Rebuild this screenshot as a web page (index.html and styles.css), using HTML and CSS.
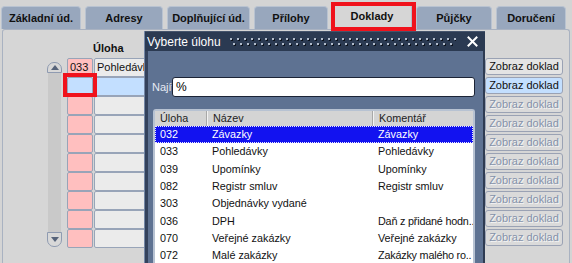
FILE: index.html
```html
<!DOCTYPE html>
<html lang="cs">
<head>
<meta charset="utf-8">
<title>Doklady</title>
<link rel="stylesheet" href="styles.css">
</head>
<body>
<div class="tabs">
  <div class="tab w1">Základní úd.</div>
  <div class="tab w2">Adresy</div>
  <div class="tab w3">Doplňující úd.</div>
  <div class="tab w4">Přílohy</div>
  <div class="tab w5 active">Doklady</div>
  <div class="tab w6">Půjčky</div>
  <div class="tab w7">Doručení</div>
</div>
<div class="panel">
  <div class="panel-head">Úloha</div>
  <div class="panel-body">
    <div class="scroll">
      <div class="sb-up"><svg width="8" height="5" viewBox="0 0 8 5"><path d="M0 5 L4 0 L8 5 Z" fill="#56637a"/></svg></div>
      <div class="sb-track"></div>
      <div class="sb-down"><svg width="8" height="5" viewBox="0 0 8 5"><path d="M0 0 L8 0 L4 5 Z" fill="#56637a"/></svg></div>
    </div>
    <div class="grid">
      <div class="row"><div class="cell code">033</div><div class="cell name">Pohledávky</div></div>
      <div class="row sel"><div class="cell code mark"></div><div class="cell name"></div></div>
      <div class="row"><div class="cell code"></div><div class="cell name"></div></div>
      <div class="row"><div class="cell code"></div><div class="cell name"></div></div>
      <div class="row"><div class="cell code"></div><div class="cell name"></div></div>
      <div class="row"><div class="cell code"></div><div class="cell name"></div></div>
      <div class="row"><div class="cell code"></div><div class="cell name"></div></div>
      <div class="row"><div class="cell code"></div><div class="cell name"></div></div>
      <div class="row"><div class="cell code"></div><div class="cell name"></div></div>
      <div class="row"><div class="cell code"></div><div class="cell name"></div></div>
    </div>
    <div class="buttons">
      <div class="btn">Zobraz doklad</div>
      <div class="btn btn-sel">Zobraz doklad</div>
      <div class="btn btn-dis">Zobraz doklad</div>
      <div class="btn btn-dis">Zobraz doklad</div>
      <div class="btn btn-dis">Zobraz doklad</div>
      <div class="btn btn-dis">Zobraz doklad</div>
      <div class="btn btn-dis">Zobraz doklad</div>
      <div class="btn btn-dis">Zobraz doklad</div>
      <div class="btn btn-dis">Zobraz doklad</div>
      <div class="btn btn-dis">Zobraz doklad</div>
    </div>
  </div>
</div>

<div class="dialog">
  <div class="dlg-title">
    <span class="dlg-caption">Vyberte úlohu</span>
    <span class="grip"></span>
    <svg class="close" width="11" height="11" viewBox="0 0 11 11"><path d="M1.5 1.5 L9.5 9.5 M9.5 1.5 L1.5 9.5" stroke="#fff" stroke-width="2" stroke-linecap="square"/></svg>
  </div>
  <div class="dlg-body">
    <div class="search">
      <span class="search-label">Najít</span>
      <div class="search-input">%</div>
    </div>
    <div class="list">
      <div class="lrow lhead"><div class="c1">Úloha</div><div class="c2">Název</div><div class="c3">Komentář</div></div>
      <div class="lrow lsel"><div class="c1">032</div><div class="c2">Závazky</div><div class="c3">Závazky</div></div>
      <div class="lrow"><div class="c1">033</div><div class="c2">Pohledávky</div><div class="c3">Pohledávky</div></div>
      <div class="lrow"><div class="c1">039</div><div class="c2">Upomínky</div><div class="c3">Upomínky</div></div>
      <div class="lrow"><div class="c1">082</div><div class="c2">Registr smluv</div><div class="c3">Registr smluv</div></div>
      <div class="lrow"><div class="c1">303</div><div class="c2">Objednávky vydané</div><div class="c3"></div></div>
      <div class="lrow"><div class="c1">036</div><div class="c2">DPH</div><div class="c3 tight">Daň z přidané hodn..</div></div>
      <div class="lrow"><div class="c1">070</div><div class="c2">Veřejné zakázky</div><div class="c3">Veřejné zakázky</div></div>
      <div class="lrow"><div class="c1">072</div><div class="c2">Malé zakázky</div><div class="c3 tight">Zakázky malého ro..</div></div>
    </div>
  </div>
</div>
</body>
</html>
```
FILE: styles.css
```css
html, body {
  margin: 0;
  padding: 0;
}
body {
  width: 572px;
  height: 263px;
  overflow: hidden;
  position: relative;
  background: #d4d4d4;
  font-family: "Liberation Sans", Arial, sans-serif;
  font-size: 11px;
  color: #111;
}

/* tabs */
.tabs {
  display: flex;
  gap: 4px;
  padding: 6px 0 0 1px;
  height: 23px;
}
.tab {
  box-sizing: border-box;
  height: 23px;
  background: #98a7bd;
  border: 1px solid #b9c3d1;
  border-bottom: none;
  border-radius: 4px 4px 0 0;
  display: flex;
  align-items: center;
  justify-content: center;
  font-weight: bold;
  color: #111;
  white-space: nowrap;
}
.w1 { width: 80px; }
.w2 { width: 78px; }
.w3 { width: 83px; }
.w4 { width: 74px; }
.w5 { width: 80px; }
.w6 { width: 76px; }
.w7 { width: 70px; }
.tab.active {
  background: #d6d6d6;
  border-color: #b4bcc8;
  margin-top: -2px;
  height: 26px;
  padding-bottom: 3px;
  position: relative;
  z-index: 2;
}
.tab.active::after {
  content: "";
  position: absolute;
  left: -2px;
  right: -5px;
  top: -3px;
  bottom: -1px;
  border: 4px solid #f0121c;
}

/* panel */
.panel {
  box-sizing: border-box;
  margin-left: 2px;
  width: 568px;
  height: 234px;
  background: #d6d6d6;
  border: 1px solid #a9b2c1;
  border-bottom: none;
  border-radius: 3px 3px 0 0;
}
.panel-head {
  box-sizing: border-box;
  height: 28px;
  padding: 11px 0 0 90px;
  line-height: 14px;
  font-weight: bold;
}
.panel-body {
  display: flex;
  padding-left: 44px;
}
.scroll {
  width: 15px;
  margin-top: 4px;
  margin-right: 5px;
  display: flex;
  flex-direction: column;
}
.sb-up, .sb-down {
  box-sizing: border-box;
  background: #d8d8d8;
  border: 1px solid #8f9bb1;
  display: flex;
  align-items: center;
  justify-content: center;
}
.sb-up {
  height: 11px;
  border-radius: 7px 7px 0 0;
}
.sb-track {
  height: 159px;
  background: #c9c9c9;
  margin: 0 1px;
}
.sb-down {
  height: 15px;
  border-radius: 0 0 7px 7px;
}

.grid {
  width: 414px;
  display: flex;
  flex-direction: column;
}
.row {
  display: flex;
  gap: 1px;
  height: 19px;
}
.cell {
  box-sizing: border-box;
  height: 19px;
  border: 1px solid #98a4b8;
  border-radius: 2px;
  line-height: 17px;
  padding-left: 2px;
  white-space: nowrap;
  overflow: hidden;
}
.code {
  width: 26px;
  background: #ffbfbf;
}
.name {
  flex: 1;
  background: #ebebeb;
}
.row.sel .cell {
  background: #c3dfff;
}
.mark {
  position: relative;
  overflow: visible;
}
.mark::after {
  content: "";
  position: absolute;
  left: -5px;
  right: -5px;
  top: -5px;
  bottom: -2px;
  border: 4px solid #f0121c;
}

.buttons {
  margin-left: 4px;
  display: flex;
  flex-direction: column;
  gap: 2px;
}
.btn {
  box-sizing: border-box;
  width: 78px;
  height: 17px;
  border: 1px solid #9aa2b4;
  border-radius: 3px;
  background: #e4e4e4;
  text-align: center;
  line-height: 15px;
  color: #111;
  white-space: nowrap;
}
.btn-sel {
  background: #c3dfff;
}
.btn-dis {
  background: #dadada;
  color: #8592aa;
  text-shadow: 1px 1px 0 #f4f4f4;
}

/* dialog */
.dialog {
  position: absolute;
  left: 145px;
  top: 31px;
  width: 340px;
  height: 232px;
  background: #5e7292;
  box-shadow: -1px 0 0 #7487a6;
  display: flex;
  flex-direction: column;
  overflow: hidden;
}
.dlg-title {
  height: 20px;
  flex: none;
  background: #2b3a52;
  border-top: 1px solid #45546c;
  box-sizing: border-box;
  display: flex;
  align-items: center;
  padding: 0 7px 0 2px;
  color: #fff;
  font-size: 12px;
}
.dlg-caption {
  white-space: nowrap;
}
.grip {
  flex: 1;
  height: 10px;
  margin: 0 11px 0 9px;
  background-image:
    radial-gradient(circle at 1px 1px, #b2bccb 1px, transparent 1px),
    radial-gradient(circle at 2px 2px, #0c121c 1px, transparent 1px),
    radial-gradient(circle at 1px 1px, #b2bccb 1px, transparent 1px),
    radial-gradient(circle at 2px 2px, #0c121c 1px, transparent 1px);
  background-size: 7px 10px;
  background-repeat: repeat-x;
  background-position: 0 1px, 0 1px, 3px 6px, 3px 6px;
}
.close {
  flex: none;
}
.dlg-body {
  flex: 1;
  box-sizing: border-box;
  padding: 26px 8px 0 4px;
  border-left: 3px solid #34425c;
  border-right: 2px solid #2e3b52;
}
.search {
  display: flex;
  align-items: center;
  height: 20px;
}
.search-label {
  width: 20px;
  color: #e6eaf2;
  white-space: nowrap;
  font-size: 11px;
}
.search-input {
  flex: 1;
  box-sizing: border-box;
  height: 20px;
  background: #fff;
  border: 1px solid #1c2436;
  border-radius: 3px;
  padding-left: 3px;
  line-height: 18px;
  font-size: 12px;
  color: #000;
}
.list {
  margin: 12px 0 0 1px;
  height: 200px;
  background: #fff;
  border: 2px solid #b7c2d2;
  border-bottom: none;
  border-radius: 3px 3px 0 0;
  font-size: 10.8px;
}
.lrow {
  display: flex;
  height: 17.33px;
  line-height: 17px;
  white-space: nowrap;
  color: #111;
}
.lrow > div {
  box-sizing: border-box;
  overflow: hidden;
  padding-left: 5px;
}
.c1 { width: 51px; }
.c2 { width: 166px; padding-left: 6px !important; }
.c3 { flex: 1; padding-left: 6px !important; }
.tight {
  letter-spacing: -0.2px;
}
.lhead {
  height: 15px;
  line-height: 15px;
  background: #d4d4d4;
  color: #222;
}
.lhead .c2, .lhead .c3 {
  border-left: 1px solid #a8a8a8;
  box-shadow: inset 1px 0 0 #f2f2f2;
}
.lsel {
  background: #1212f0;
  color: #fff;
  outline: 1px dotted #e8e8ff;
  outline-offset: -1px;
}
```
